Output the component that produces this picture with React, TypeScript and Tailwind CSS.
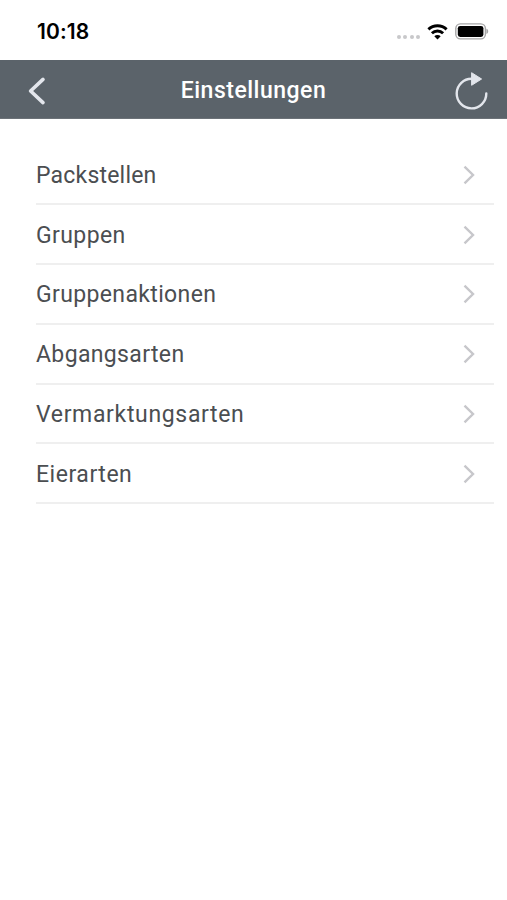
import React from "react";

type Item = { label: string; tracking: string };

const items: Item[] = [
  { label: "Packstellen", tracking: "tracking-[0.2px]" },
  { label: "Gruppen", tracking: "tracking-[0.4px]" },
  { label: "Gruppenaktionen", tracking: "tracking-[0.36px]" },
  { label: "Abgangsarten", tracking: "tracking-[0.36px]" },
  { label: "Vermarktungsarten", tracking: "tracking-[0.66px]" },
  { label: "Eierarten", tracking: "tracking-[0.54px]" },
];

function StatusBar() {
  return (
    <div className="flex h-[60px] items-start justify-between pl-[37px] pr-[18px] pt-[19px] font-['Inter',sans-serif]">
      <span className="text-[21px] font-semibold leading-[26px] tracking-[0.1px] text-black">10:18</span>
      <div className="flex items-center pt-[4px]">
        <div className="mr-[7px] mt-[11px] flex gap-[2.4px]">
          {[0, 1, 2, 3].map((n) => (
            <span key={n} className="size-[4px] rounded-full bg-[#c8c8ca]" />
          ))}
        </div>
        <svg className="mr-[7px] h-[16px] w-[21px]" viewBox="0 0 21 16" fill="none" stroke="#000" strokeWidth="2.9">
          <path d="M1.4 5.4a13 13 0 0 1 18.2 0" />
          <path d="M4.9 9.3a8 8 0 0 1 11.2 0" />
          <path d="M10.5 15.6 7.3 12.3a4.6 4.6 0 0 1 6.4 0Z" fill="#000" stroke="none" />
        </svg>
        <svg className="h-[17px] w-[34px]" viewBox="0 0 34 17">
          <rect x="0.8" y="0.9" width="29.6" height="15" rx="4.6" fill="#fff" stroke="#a5a5a6" strokeWidth="1.4" />
          <rect x="2.8" y="2.9" width="25.6" height="11" rx="2.4" fill="#000" />
          <path d="M31.4 5.8c2.4.6 2.4 4.6 0 5.2Z" fill="#a5a5a6" />
        </svg>
      </div>
    </div>
  );
}

function Header() {
  return (
    <header className="grid h-[59px] grid-cols-[60px_1fr_60px] items-center border-b border-[#6c7278] bg-[#5b636a] text-[#e3e6ec]">
      <svg className="ml-[26px] mt-[3px] h-[30px] w-[20px]" viewBox="0 0 20 30" fill="none" stroke="currentColor" strokeWidth="3.6" strokeLinecap="round" strokeLinejoin="round">
        <path d="M17 3.4 4.6 15 17 26.6" />
      </svg>
      <h1 className="pt-[3px] text-center font-['Roboto',sans-serif] text-[23px] font-medium leading-[30px] tracking-[0.5px] text-white">Einstellungen</h1>
      <svg className="ml-[6px] mt-[3px] h-[40px] w-[36px]" viewBox="0 0 36 40">
        <path d="M33.3 22.5A14.8 14.8 0 1 1 19 7.8" fill="none" stroke="currentColor" strokeWidth="2.4" strokeLinecap="round" />
        <path d="M18.6 1.7 28.6 8 18.6 14.3Z" fill="currentColor" stroke="currentColor" strokeWidth="1" strokeLinejoin="round" />
      </svg>
    </header>
  );
}

export default function App() {
  return (
    <div className="min-h-screen w-full bg-white">
      <StatusBar />
      <Header />
      <ul className="ml-[36px] mr-[13px] pt-[26.4px]">
        {items.map(({ label, tracking }) => (
          <li key={label} className="flex h-[59.8px] items-center justify-between border-b-2 border-[#efefef] pr-[19px]">
            <span className={`pt-[3px] font-['Roboto',sans-serif] text-[23px] leading-[30px] text-[#4b4e51] ${tracking}`}>{label}</span>
            <svg className="mt-[1px] h-[20px] w-[12px]" viewBox="0 0 12 20" fill="none" stroke="#c7c7cb" strokeWidth="2.4">
              <path d="M1.5 1.7 10 10l-8.5 8.3" />
            </svg>
          </li>
        ))}
      </ul>
    </div>
  );
}
